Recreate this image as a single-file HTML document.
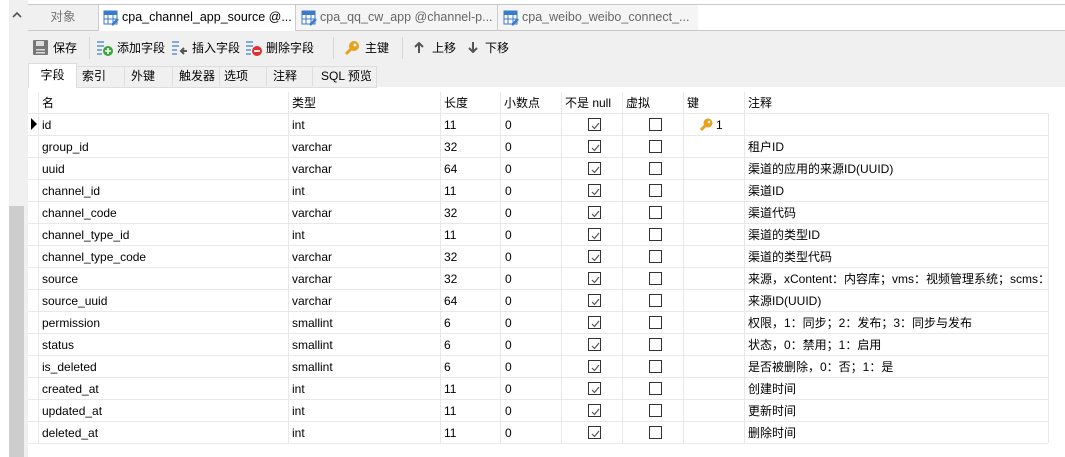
<!DOCTYPE html>
<html><head><meta charset="utf-8"><style>
*{margin:0;padding:0;box-sizing:border-box}
body{width:1065px;height:457px;overflow:hidden;background:#fff;font-family:"Liberation Sans","Noto Sans CJK SC",sans-serif;font-size:12px;color:#000;position:relative}
.a{position:absolute;white-space:nowrap}
.tab{position:absolute;top:5px;height:25px;line-height:25px;font-size:12.5px}
.cb{position:absolute;width:13px;height:13px;border:1px solid #333;background:#fff}
.cb svg{position:absolute;left:1px;top:1px}
.row{position:absolute;left:28px;width:1020px;height:22px;border-bottom:1px solid #e8e8e8}
.row span{position:absolute;top:0;line-height:22px;white-space:nowrap}
.vl{position:absolute;top:92px;width:1px;height:351px;background:#e8e8e8}
</style></head><body>
<div class="a" style="left:9px;top:0;width:19px;height:457px;background:#f0f0f0"></div>
<div class="a" style="left:9px;top:206px;width:15px;height:251px;background:#cdcdcd"></div>
<svg class="a" style="left:12px;top:11px" width="10" height="7"><path d="M1 6 L5 2 L9 6" stroke="#555" stroke-width="1.6" fill="none"/></svg>
<div class="a" style="left:28px;top:4px;width:1037px;height:1px;background:#c8c8c8"></div>
<div class="a" style="left:28px;top:30px;width:1037px;height:1px;background:#c8c8c8"></div>
<div class="a" style="left:28px;top:31px;width:1037px;height:56px;background:#f0f0f0"></div>
<div class="tab" style="left:28px;width:70px;background:#f0f0f0;color:#777;text-align:center">对象</div>
<div class="tab" style="left:98px;width:198px;background:#fff;border-left:1px solid #ccc;border-right:1px solid #ccc;height:26px"></div>
<div class="tab" style="left:296px;width:202px;background:#f5f5f5;border-right:1px solid #ccc"></div>
<div class="tab" style="left:498px;width:200px;background:#f5f5f5"></div>
<svg class="a" style="left:103px;top:10px" width="16" height="16"><rect x="1" y="1" width="13" height="13" fill="#fff" stroke="#3a7ac8"/><rect x="1" y="1" width="13" height="4" fill="#3a7ac8"/><path d="M1 9H14M5 5V14M10 5V14" stroke="#3a7ac8"/><path d="M9 15L15 9" stroke="#3a7ac8" stroke-width="2.5"/></svg>
<div class="tab a" style="left:122px;color:#000">cpa_channel_app_source @...</div>
<svg class="a" style="left:301px;top:10px" width="16" height="16"><rect x="1" y="1" width="13" height="13" fill="#fff" stroke="#3a7ac8"/><rect x="1" y="1" width="13" height="4" fill="#3a7ac8"/><path d="M1 9H14M5 5V14M10 5V14" stroke="#3a7ac8"/><path d="M9 15L15 9" stroke="#3a7ac8" stroke-width="2.5"/></svg>
<div class="tab a" style="left:320px;color:#666">cpa_qq_cw_app @channel-p...</div>
<svg class="a" style="left:503px;top:10px" width="16" height="16"><rect x="1" y="1" width="13" height="13" fill="#fff" stroke="#3a7ac8"/><rect x="1" y="1" width="13" height="4" fill="#3a7ac8"/><path d="M1 9H14M5 5V14M10 5V14" stroke="#3a7ac8"/><path d="M9 15L15 9" stroke="#3a7ac8" stroke-width="2.5"/></svg>
<div class="tab a" style="left:522px;color:#666">cpa_weibo_weibo_connect_...</div>
<svg class="a" style="left:33px;top:40px" width="15" height="15"><rect x="0" y="0" width="15" height="15" rx="1" fill="#777"/><rect x="3" y="1" width="8" height="5" fill="#ddd"/><rect x="3" y="9" width="9" height="1.5" fill="#ddd"/><rect x="3" y="12" width="9" height="1.5" fill="#ddd"/></svg>
<div class="a" style="left:53px;top:40px;line-height:16px">保存</div>
<div class="a" style="left:89px;top:37px;width:1px;height:22px;background:#d8d8d8"></div>
<svg class="a" style="left:97px;top:40px" width="16" height="16"><path d="M0 2H7M0 6H7M0 10H5M0 14H5" stroke="#5a8fd0" stroke-width="1.5"/><circle cx="11" cy="11" r="5" fill="#3aa53a"/><path d="M8 11H14M11 8V14" stroke="#fff" stroke-width="1.6"/></svg>
<div class="a" style="left:117px;top:40px;line-height:16px">添加字段</div>
<svg class="a" style="left:172px;top:40px" width="16" height="16"><path d="M0 2H7M0 6H7M0 10H5M0 14H5" stroke="#5a8fd0" stroke-width="1.5"/><path d="M15 11H9M12 8L9 11L12 14" stroke="#555" stroke-width="2" fill="none"/></svg>
<div class="a" style="left:192px;top:40px;line-height:16px">插入字段</div>
<svg class="a" style="left:246px;top:40px" width="16" height="16"><path d="M0 2H7M0 6H7M0 10H5M0 14H5" stroke="#5a8fd0" stroke-width="1.5"/><circle cx="11" cy="11" r="5" fill="#e03030"/><path d="M8 11H14" stroke="#fff" stroke-width="1.8"/></svg>
<div class="a" style="left:266px;top:40px;line-height:16px">删除字段</div>
<div class="a" style="left:333px;top:37px;width:1px;height:22px;background:#d8d8d8"></div>
<svg class="a" style="left:344px;top:40px" width="16" height="16"><circle cx="10" cy="6" r="5" fill="#e8a020"/><circle cx="11" cy="5" r="1.5" fill="#fff"/><path d="M7 9L2 14" stroke="#e8a020" stroke-width="3"/></svg>
<div class="a" style="left:365px;top:40px;line-height:16px">主键</div>
<div class="a" style="left:402px;top:37px;width:1px;height:22px;background:#d8d8d8"></div>
<svg class="a" style="left:414px;top:42px" width="10" height="11"><path d="M5 11V2M1 5L5 1L9 5" stroke="#555" stroke-width="2" fill="none"/></svg>
<div class="a" style="left:432px;top:40px;line-height:16px">上移</div>
<svg class="a" style="left:468px;top:42px" width="10" height="11"><path d="M5 0V9M1 6L5 10L9 6" stroke="#555" stroke-width="2" fill="none"/></svg>
<div class="a" style="left:485px;top:40px;line-height:16px">下移</div>
<div class="a" style="left:28px;top:63px;width:49px;height:25px;background:#fff;border:1px solid #ddd;border-bottom:none;line-height:22px;text-align:center">字段</div>
<div class="a" style="left:77px;top:66px;width:300px;height:22px;border:1px solid #ddd;border-left:none;background:#f0f0f0"></div>
<div class="a" style="left:77px;top:66px;height:22px;line-height:20px">
<span class="a" style="left:0;width:48px;border-right:1px solid #ddd;padding-left:5px">索引</span>
<span class="a" style="left:48px;width:48px;border-right:1px solid #ddd;padding-left:6px">外键</span>
<span class="a" style="left:96px;width:47px;border-right:1px solid #ddd;padding-left:6px">触发器</span>
<span class="a" style="left:143px;width:47px;border-right:1px solid #ddd;padding-left:4px">选项</span>
<span class="a" style="left:190px;width:46px;border-right:1px solid #ddd;padding-left:6px">注释</span>
<span class="a" style="left:236px;width:64px;padding-left:8px">SQL 预览</span>
</div>
<div class="row" style="top:92px;height:22px"><span style="left:14px">名</span><span style="left:264px">类型</span><span style="left:416px">长度</span><span style="left:476px">小数点</span><span style="left:537px">不是 null</span><span style="left:598px">虚拟</span><span style="left:659px">键</span><span style="left:720px">注释</span></div>
<div class="vl" style="left:38px"></div><div class="vl" style="left:288px"></div><div class="vl" style="left:440px"></div><div class="vl" style="left:500px"></div><div class="vl" style="left:561px"></div><div class="vl" style="left:622px"></div><div class="vl" style="left:683px"></div><div class="vl" style="left:744px"></div><div class="vl" style="left:1048px;top:113px;height:330px"></div>
<svg class="a" style="left:31px;top:118px" width="6" height="12"><path d="M0 0L6 6L0 12Z" fill="#000"/></svg>
<div id="rows"></div>
<script>
var d=[["id","int","11","","1"],["group_id","varchar","32","租户ID"],["uuid","varchar","64","渠道的应用的来源ID(UUID)"],["channel_id","int","11","渠道ID"],["channel_code","varchar","32","渠道代码"],["channel_type_id","int","11","渠道的类型ID"],["channel_type_code","varchar","32","渠道的类型代码"],["source","varchar","32","来源，xContent：内容库；vms：视频管理系统；scms："],["source_uuid","varchar","64","来源ID(UUID)"],["permission","smallint","6","权限，1：同步；2：发布；3：同步与发布"],["status","smallint","6","状态，0：禁用；1：启用"],["is_deleted","smallint","6","是否被删除，0：否；1：是"],["created_at","int","11","创建时间"],["updated_at","int","11","更新时间"],["deleted_at","int","11","删除时间"]];
var h="";
d.forEach(function(r,i){var t=114+i*22;
h+='<div class="row" style="top:'+t+'px"><span style="left:14px">'+r[0]+'</span><span style="left:264px">'+r[1]+'</span><span style="left:416px">'+r[2]+'</span><span style="left:477px">0</span><span style="left:720px;overflow:hidden;width:299px">'+r[3]+'</span></div>';
h+='<div class="cb" style="left:588px;top:'+(t+4)+'px"><svg width="11" height="11"><path d="M2 6L4.5 8.5L9 3" stroke="#555" stroke-width="1.2" fill="none"/></svg></div>';
h+='<div class="cb" style="left:649px;top:'+(t+4)+'px"></div>';
if(r[4])h+='<svg class="a" style="left:699px;top:'+(t+4)+'px" width="14" height="14"><circle cx="9" cy="5" r="4.5" fill="#e8a020"/><circle cx="10" cy="4" r="1.3" fill="#fff"/><path d="M6 8L2 12" stroke="#e8a020" stroke-width="3"/></svg><span class="a" style="left:716px;top:'+t+'px;line-height:22px">1</span>';
});
document.getElementById("rows").innerHTML=h;
</script>
</body></html>
